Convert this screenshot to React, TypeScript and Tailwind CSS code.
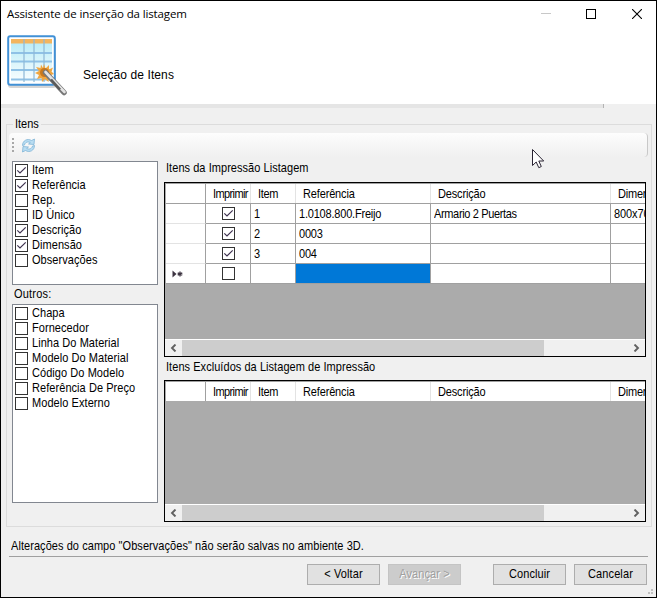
import { useState } from "react";
import clsx from "clsx";

type Row = {
  print: boolean;
  item: string;
  ref: string;
  desc: string;
  dim: string;
  isNew?: boolean;
};

const FIELDS = [
  { label: "Item", on: true },
  { label: "Referência", on: true },
  { label: "Rep.", on: false },
  { label: "ID Único", on: false },
  { label: "Descrição", on: true },
  { label: "Dimensão", on: true },
  { label: "Observações", on: false },
];

const OTHERS = [
  { label: "Chapa", on: false },
  { label: "Fornecedor", on: false },
  { label: "Linha Do Material", on: false },
  { label: "Modelo Do Material", on: false },
  { label: "Código Do Modelo", on: false },
  { label: "Referência De Preço", on: false },
  { label: "Modelo Externo", on: false },
];

const ROWS: Row[] = [
  { print: true, item: "1", ref: "1.0108.800.Freijo", desc: "Armario 2 Puertas", dim: "800x700" },
  { print: true, item: "2", ref: "0003", desc: "", dim: "" },
  { print: true, item: "3", ref: "004", desc: "", dim: "" },
  { print: false, item: "", ref: "", desc: "", dim: "", isNew: true },
];

const COLS = "grid grid-cols-[40px_45px_45px_135px_180px_60px]";

function T({ children, className }: { children: React.ReactNode; className?: string }) {
  return (
    <span className={clsx("inline-block origin-center scale-y-[1.09] whitespace-pre", className)}>
      {children}
    </span>
  );
}

function Check({ on }: { on: boolean }) {
  return (
    <svg width="13" height="13" viewBox="0 0 13 13" className="block shrink-0">
      <rect x="0.5" y="0.5" width="12" height="12" fill="#fff" stroke="#333" />
      {on && <path d="M2.300 6.300 L5 9 L10.700 3.300" fill="none" stroke="#3f3350" strokeWidth="1.2" />}
    </svg>
  );
}

function CheckList({
  items,
  className,
}: {
  items: { label: string; on: boolean }[];
  className: string;
}) {
  const [list, setList] = useState(items);
  const toggle = (i: number) =>
    setList(list.map((it, n) => (n === i ? { ...it, on: !it.on } : it)));

  return (
    <ul className={clsx("w-[146px] border border-[#828790] bg-white pt-px pl-0.5", className)}>
      {list.map(({ label, on }, i) => (
        <li key={label} onClick={() => toggle(i)} className="flex h-[15px] items-center gap-1">
          <Check on={on} />
          <T className="tracking-[0.06px]">{label}</T>
        </li>
      ))}
    </ul>
  );
}

function ScrollBar() {
  return (
    <div className="flex h-[17px] shrink-0 items-stretch border-t border-white bg-[#f0f0f0]">
      <div className="flex w-[17px] items-center justify-center">
        <svg width="7" height="8" viewBox="0 0 7 8">
          <path d="M5.5 0.5 L2 4 L5.5 7.5" fill="none" stroke="#606060" strokeWidth="1.9" />
        </svg>
      </div>
      <div className="w-[362px] bg-[#cdcdcd]" />
      <div className="flex flex-1 items-center justify-end pr-[5px]">
        <svg width="7" height="8" viewBox="0 0 7 8">
          <path d="M1.5 0.5 L5 4 L1.5 7.5" fill="none" stroke="#606060" strokeWidth="1.9" />
        </svg>
      </div>
    </div>
  );
}

function DataGrid({ rows, className }: { rows: Row[]; className: string }) {
  const headCell = "flex items-center border-r border-[#e3e3e3] bg-white pt-0.5 pl-[7px]";
  const cell = "flex items-center border-r border-b border-[#a0a0a0] bg-white pt-px pl-[3px]";

  return (
    <div
      className={clsx(
        "flex w-[482px] flex-col overflow-hidden border border-black bg-[#ababab]",
        className,
      )}
    >
      <div className="flex flex-1 flex-col overflow-hidden border-t border-[#a0a0a0] pl-px">
        <div
          className={clsx(
            COLS,
            "h-5 w-[505px] border-b",
            rows.length ? "border-[#a0a0a0]" : "border-[#ababab]",
          )}
        >
          <div className="border-r border-[#a0a0a0] bg-white" />
          <div className={headCell}>
            <T className="tracking-[-0.6px]">Imprimir</T>
          </div>
          <div className={headCell}>
            <T className="tracking-[-0.3px]">Item</T>
          </div>
          <div className={headCell}>
            <T className="tracking-[-0.15px]">Referência</T>
          </div>
          <div className={headCell}>
            <T className="tracking-[-0.15px]">Descrição</T>
          </div>
          <div className={headCell}>
            <T className="tracking-[-0.2px]">Dimensão</T>
          </div>
        </div>
        {rows.map((row, i) => (
          <div key={i} className={clsx(COLS, "h-5 w-[505px]")}>
            <div
              className={clsx(
                "flex items-center border-r border-b border-r-[#a0a0a0] bg-white pl-1.5",
                row.isNew ? "border-b-[#a0a0a0]" : "border-b-[#e3e3e3]",
              )}
            >
              {row.isNew && (
                <svg width="11" height="8" viewBox="0 0 11 8">
                  <path d="M0.5 0.5 L4.5 4 L0.5 7.5 Z" fill="#3c3340" />
                  <path
                    d="M8 1.5 V6.5 M5.7 2.8 L10.3 5.2 M10.3 2.8 L5.7 5.2"
                    stroke="#3c3340"
                    strokeWidth="1.3"
                  />
                </svg>
              )}
            </div>
            <div className="flex items-center justify-center border-r border-b border-[#a0a0a0] bg-white">
              <Check on={row.print} />
            </div>
            <div className={cell}>
              <T>{row.item}</T>
            </div>
            <div
              className={clsx(
                "flex items-center border-r border-b border-[#a0a0a0] pt-px pl-[3px]",
                row.isNew ? "bg-[#0078d7]" : "bg-white",
              )}
            >
              <T className="tracking-[-0.2px]">{row.ref}</T>
            </div>
            <div className={cell}>
              <T className="tracking-[-0.35px]">{row.desc}</T>
            </div>
            <div className={cell}>
              <T className="tracking-[-0.1px]">{row.dim}</T>
            </div>
          </div>
        ))}
      </div>
      <ScrollBar />
    </div>
  );
}

function WizardIcon() {
  return (
    <svg width="64" height="68" viewBox="0 0 64 68" className="block">
      <defs>
        <linearGradient id="sheet" x1="0" y1="0" x2="0" y2="1">
          <stop offset="0" stopColor="#b4eaf6" />
          <stop offset="1" stopColor="#fbfeff" />
        </linearGradient>
      </defs>
      <rect x="2" y="4" width="48" height="50" rx="3" fill="#d5d5d5" />
      <rect x="2.200" y="2.200" width="46.6" height="48.6" rx="2" fill="#fff" stroke="#4191d6" strokeWidth="2" />
      <rect x="5" y="5" width="41" height="43" fill="url(#sheet)" />
      <rect x="5" y="5" width="41" height="4.5" fill="#f3b55e" />
      <path d="M5 19H46 M5 27.500H46 M5 36H46 M5 45.500H46" stroke="#8fc1e6" strokeWidth="1.8" />
      <path d="M18 5V48 M28 5V48 M38 5V48" stroke="#8fb9d8" strokeWidth="1.5" opacity="0.8" />
      <path
        d="M38 30 L39.500 34.500 L43 31 L43 35.500 L47 33.500 L45.500 37.500 L48 40 L45 41 L47 45 L42.500 44 L42.500 48 L39 45 L36 48 L35.500 44 L31 45 L33 41 L29 39 L33 37 L30 33 L34.500 34 L35 30.500 L37 34 Z"
        fill="#f0a640"
      />
      <circle cx="38.500" cy="38.500" r="4.500" fill="#c9781c" />
      <path d="M39.500 38.500 L58 58.500" stroke="#777" strokeWidth="5.500" strokeLinecap="round" />
      <path d="M39.500 38 L58.500 58" stroke="#e4e4e4" strokeWidth="2.600" strokeLinecap="round" />
      <path d="M45 45.500 L54 55.500" stroke="#5a5a5a" strokeWidth="2.600" />
    </svg>
  );
}

function RefreshIcon() {
  return (
    <svg width="15" height="15" viewBox="0 0 15 15" className="block">
      <path d="M1.500 7.500 C1.500 2.500 6.500 0 10.500 2.500 L13.500 1 L13 6.500 L7.500 6 L9.300 4.500 C6.500 3.200 4 4.500 3.500 7 Z" fill="#b9ddf2" stroke="#74add3" strokeWidth="0.7" />
      <path d="M13.500 7.500 C13.500 12.500 8.500 15 4.500 12.500 L1.500 14 L2 8.500 L7.500 9 L5.700 10.500 C8.500 11.800 11 10.500 11.500 8 Z" fill="#b9ddf2" stroke="#74add3" strokeWidth="0.7" />
    </svg>
  );
}

function Button({ children, disabled }: { children: React.ReactNode; disabled?: boolean }) {
  return (
    <button
      disabled={disabled}
      className={clsx(
        "flex h-[21px] w-[73px] items-center justify-center border",
        disabled
          ? "border-[#c4c4c4] bg-[#cccccc] text-[#a0a0a0] [text-shadow:1px_1px_0_#fff]"
          : "border-[#adadad] bg-[#e1e1e1]",
      )}
    >
      <T className="tracking-[0.1px]">{children}</T>
    </button>
  );
}

export default function App() {
  return (
    <div className="relative flex h-[598px] w-[657px] flex-col overflow-hidden border border-black bg-[#f0f0f0] font-['Liberation_Sans',sans-serif] text-[11px] leading-[15px] text-black select-none">
      <header className="h-[103px] shrink-0 bg-white">
        <div className="flex h-[25px] items-center justify-between pr-3.5 pl-1.5">
          <h1 className="font-['Open_Sans',sans-serif] text-[11.5px] tracking-[-0.13px] whitespace-pre">
            Assistente de inserção da listagem
          </h1>
          <div className="flex items-center gap-[35px]">
            <svg width="10" height="11" viewBox="0 0 10 11">
              <path d="M0 5.500H10" stroke="#c8c8c8" />
            </svg>
            <svg width="10" height="10" viewBox="0 0 10 10">
              <rect x="0.5" y="0.5" width="9" height="9" fill="none" stroke="#000" />
            </svg>
            <svg width="10" height="10" viewBox="0 0 10 10" className="ml-px">
              <path d="M0 0 L10 10 M10 0 L0 10" stroke="#000" strokeWidth="1.1" />
            </svg>
          </div>
        </div>
        <div className="flex pt-2 pl-[5px]">
          <WizardIcon />
          <p className="pt-[33px] pl-[13px] text-xs tracking-[0.1px]">Seleção de Itens</p>
        </div>
      </header>
      <div className="h-1 w-[603px] shrink-0 border-r border-[#b4b4b4] bg-[#e5e5e5]" />

      <fieldset className="mt-[9px] ml-[5px] flex h-[410px] w-[646px] shrink-0 flex-col border border-[#dcdcdc]">
        <legend className="ml-1.5 h-[15px] px-0.5">
          <T>Itens</T>
        </legend>
        <div className="mt-px ml-0.5 flex h-6 w-[639px] shrink-0 items-center gap-[7px] rounded-sm border-r border-[#c8c8c8] bg-linear-to-b from-[#fdfdfd] to-[#f0f0f0] pl-[3px]">
          <svg width="2" height="14" viewBox="0 0 2 14">
            <path d="M1 0V14" stroke="#a8a8a8" strokeWidth="2" strokeDasharray="2 2" />
          </svg>
          <RefreshIcon />
        </div>
        <div className="mt-1 ml-[5px] flex gap-1.5">
          <div className="flex flex-col">
            <CheckList items={FIELDS} className="h-[124px]" />
            <p className="h-[19px] pt-0.5 pl-0.5">
              <T className="tracking-[0.2px]">Outros:</T>
            </p>
            <CheckList items={OTHERS} className="h-[199px]" />
          </div>
          <div className="flex flex-col">
            <p className="h-[21px] pl-0.5">
              <T className="tracking-[0.05px]">Itens da Impressão Listagem</T>
            </p>
            <DataGrid rows={ROWS} className="h-[175px]" />
            <p className="h-[23px] pt-[3px] pl-0.5">
              <T className="tracking-[0.05px]">Itens Excluídos da Listagem de Impressão</T>
            </p>
            <DataGrid rows={[]} className="h-[142px]" />
          </div>
        </div>
      </fieldset>

      <p className="mx-2 h-[30px] shrink-0 border-b border-[#a0a0a0] pt-3 pl-0.5">
        <T className="tracking-[0.06px]">
          Alterações do campo "Observações" não serão salvas no ambiente 3D.
        </T>
      </p>
      <div className="mt-[7px] flex justify-end gap-2 pr-[9px]">
        <Button>{"< Voltar"}</Button>
        <Button disabled>{"Avançar >"}</Button>
        <div className="w-4" />
        <Button>Concluir</Button>
        <Button>Cancelar</Button>
      </div>

      <svg width="6" height="6" viewBox="0 0 6 6" className="absolute right-0.5 bottom-0.5">
        <path d="M3 0h2v2h-2z M0 3h2v2h-2z M3 3h2v2h-2z" fill="#c0c0c0" />
      </svg>
      <svg width="13" height="20" viewBox="0 0 13 20" className="absolute top-[148px] left-[531px]">
        <path
          d="M0.500 0.500 V16.500 L4.200 13 L6.800 18.700 L9.300 17.500 L6.800 12 H11.700 Z"
          fill="#fff"
          stroke="#2a2433"
        />
      </svg>
    </div>
  );
}
